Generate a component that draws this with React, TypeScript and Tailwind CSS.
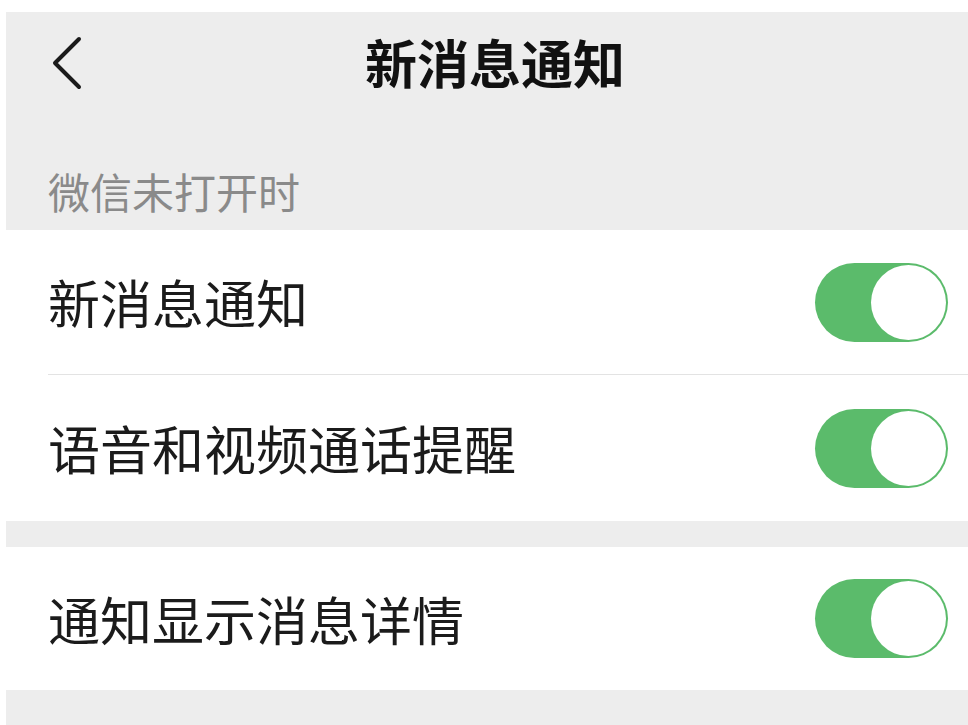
const font = { fontFamily: '"Noto Sans CJK SC", "Noto Sans", sans-serif' };

const Toggle: React.FC = () => {
  return (
    <div className="w-[133px] h-[79px] rounded-full bg-[#5bbb6b] flex items-center justify-end pr-[2px]">
      <div className="w-[75px] h-[75px] rounded-full bg-white" />
    </div>
  );
};

const Row: React.FC<{ label: string; h: string }> = ({ label, h }) => {
  return (
    <div className={`flex items-center justify-between pl-[42px] pr-[20px] bg-white ${h}`}>
      <span className="text-[52px] leading-[60px] text-[#1b1b1b]">{label}</span>
      <Toggle />
    </div>
  );
};

const App: React.FC = () => {
  return (
    <div className="w-[968px] h-[725px] bg-white pt-[12px] pl-[6px] overflow-hidden" style={font}>
      <div className="h-full bg-[#ededed] flex flex-col">
        <div className="h-[106px] grid grid-cols-[1fr_auto_1fr] items-center">
          <div className="pl-[44px] pb-[4px]">
            <svg width="34" height="56" viewBox="0 0 34 56" fill="none">
              <path d="M29 4 L5 28 L29 52" stroke="#1a1a1a" strokeWidth="4" strokeLinecap="round" strokeLinejoin="round" />
            </svg>
          </div>
          <div className="pl-[16px] pb-[6px] text-[52px] leading-[60px] font-bold text-[#111]">新消息通知</div>
          <div />
        </div>
        <div className="h-[112px] pl-[42px] pt-[52px]">
          <span className="text-[42px] leading-[42px] text-[#8a8a8a]">微信未打开时</span>
        </div>
        <Row label="新消息通知" h="h-[144px]" />
        <div className="bg-white pl-[42px]">
          <div className="h-px bg-[#e3e3e3]" />
        </div>
        <Row label="语音和视频通话提醒" h="h-[146px]" />
        <div className="h-[26px]" />
        <Row label="通知显示消息详情" h="h-[143px]" />
      </div>
    </div>
  );
};

export default App;
